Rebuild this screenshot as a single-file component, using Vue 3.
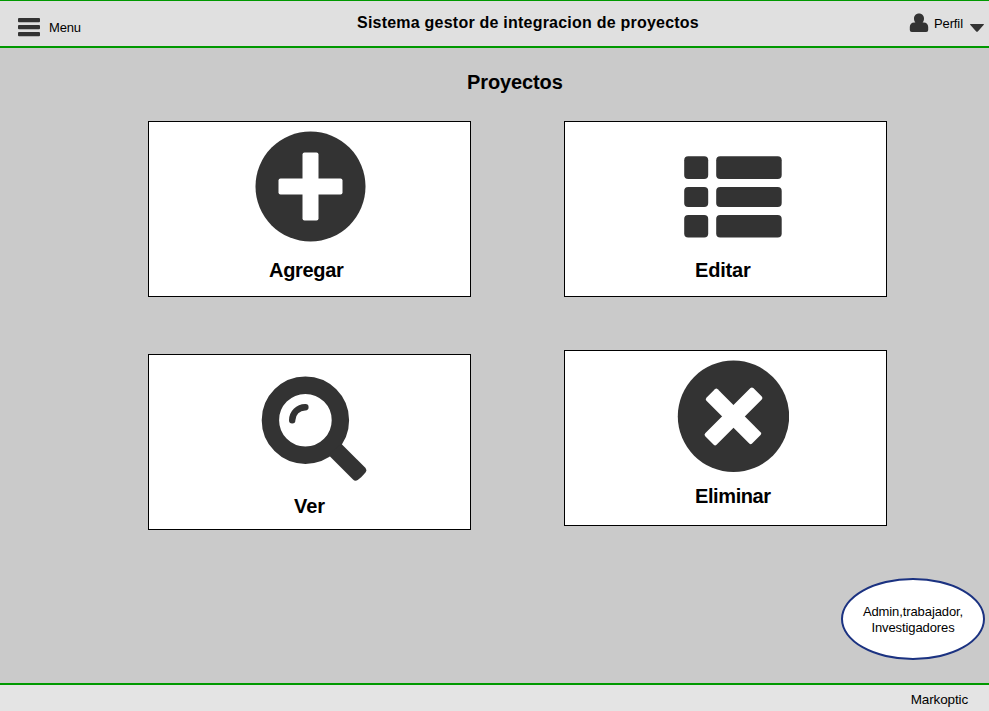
<script setup>
const columns = [
  [
    { id: 'agregar', label: 'Agregar' },
    { id: 'ver', label: 'Ver' },
  ],
  [
    { id: 'editar', label: 'Editar' },
    { id: 'eliminar', label: 'Eliminar' },
  ],
]
</script>

<template>
  <div class="page">
    <header class="topbar">
      <div class="menu">
        <svg class="menu-icon" width="22" height="19" viewBox="0 0 22 19">
          <rect y="0" width="22" height="4.3" rx="1" />
          <rect y="7" width="22" height="4.3" rx="1" />
          <rect y="14" width="22" height="4.300" rx="1" />
        </svg>
        <span class="menu-text">Menu</span>
      </div>
      <h1 class="title">Sistema gestor de integracion de proyectos</h1>
      <div class="profile">
        <svg class="user-icon" width="20" height="20" viewBox="0 0 20 20">
          <path d="M10 .6c3 0 5 2.200 5 5 0 1.700-.5 3-1.400 4h1.200c2.600 0 4.400 1.900 4.400 4.500V17q0 2-2 2H2.800q-2 0-2-2v-2.900c0-2.600 1.800-4.500 4.400-4.500h1.200C5.500 8.600 5 7.300 5 5.600c0-2.800 2-5 5-5z" />
        </svg>
        <span class="profile-text">Perfil</span>
        <svg class="caret" width="16" height="10" viewBox="0 0 16 10">
          <path d="M1.500 1h13q.8 0 .3.800L8.800 8.500q-.8.700-1.600 0L1.200 1.800q-.5-.8.300-.8z" />
        </svg>
      </div>
    </header>

    <main class="content">
      <h2 class="heading">Proyectos</h2>
      <div class="columns">
        <div v-for="(cards, i) in columns" :key="i" class="column">
          <section v-for="card in cards" :key="card.id" class="card" :class="card.id">
            <svg v-if="card.id === 'agregar'" class="icon" width="112" height="112" viewBox="0 0 112 112">
              <circle cx="55.500" cy="55.500" r="55" />
              <g class="cut">
                <rect x="23.500" y="47.500" width="64" height="16" rx="2" />
                <rect x="47.500" y="21.500" width="16" height="68" rx="2" />
              </g>
            </svg>
            <svg v-else-if="card.id === 'editar'" class="icon" width="98" height="82" viewBox="0 0 98 82">
              <rect x=".2" y=".2" width="24" height="22.800" rx="4" />
              <rect x="32.200" y=".2" width="65.500" height="22.800" rx="4" />
              <rect x=".2" y="31" width="24" height="20" rx="4" />
              <rect x="32.200" y="31" width="65.500" height="20" rx="4" />
              <rect x=".2" y="59" width="24" height="22.500" rx="4" />
              <rect x="32.200" y="59" width="65.500" height="22.500" rx="4" />
            </svg>
            <svg v-else-if="card.id === 'ver'" class="icon" width="106" height="106" viewBox="0 0 106 106">
              <circle class="lens" cx="44.400" cy="44.200" r="35" />
              <path class="glint" d="M31.200 44.300A13 13 0 0 1 44.400 31.200" />
              <path d="M80 67.500L104.300 91.800Q106.300 94 104.300 96.800Q101 101 96.700 104Q94.200 105.600 92 103.500L67.500 79z" />
            </svg>
            <svg v-else class="icon" width="112" height="112" viewBox="0 0 112 112">
              <circle cx="56.500" cy="56.300" r="55.700" />
              <g class="cut" transform="translate(56.500 56.400) rotate(45)">
                <rect x="-32.300" y="-8" width="64.600" height="16" rx="2" />
                <rect x="-8" y="-34" width="16" height="68" rx="2" />
              </g>
            </svg>
            <h3 class="label">{{ card.label }}</h3>
          </section>
        </div>
      </div>
      <div class="roles">Admin,trabajador,<br />Investigadores</div>
    </main>

    <footer class="footer">Markoptic</footer>
  </div>
</template>

<style>
body {
  margin: 0;
}
</style>

<style scoped>
.page {
  display: flex;
  flex-direction: column;
  box-sizing: border-box;
  width: 989px;
  height: 711px;
  overflow: hidden;
  background: #cacaca;
  color: #000;
  font-family: "Liberation Sans", Arial, sans-serif;
  font-size: 13px;
}
h1, h2, h3 {
  margin: 0;
  font-weight: 700;
}
svg {
  display: block;
  flex: none;
  fill: #333;
}
.topbar {
  display: grid;
  grid-template-columns: 357px 1fr 80px;
  box-sizing: border-box;
  height: 48px;
  border-top: 1px solid #009900;
  border-bottom: 2px solid #009900;
  background: #e0e0e0;
}
.menu {
  display: flex;
  align-items: flex-start;
  gap: 9px;
  padding: 17px 0 0 18px;
}
.menu-text {
  margin-top: 1px;
  letter-spacing: -0.15px;
  line-height: 18px;
}
.title {
  padding-top: 13px;
  font-size: 16px;
  letter-spacing: 0.225px;
  line-height: 18px;
  white-space: nowrap;
}
.profile {
  display: flex;
  align-items: flex-start;
  padding-top: 12px;
}
.profile-text {
  width: 29px;
  margin: 3px 6px 0 5px;
  letter-spacing: -0.12px;
  line-height: 16px;
}
.caret {
  margin-top: 10px;
}
.content {
  display: flex;
  flex: 1;
  flex-direction: column;
  padding: 22px 4px 23px 148px;
}
.heading {
  padding-left: 319px;
  font-size: 20px;
  letter-spacing: -0.12px;
  line-height: 24px;
}
.columns {
  display: flex;
  gap: 93px;
  margin-top: 27px;
}
.column {
  display: flex;
  flex-direction: column;
  gap: 57px;
}
.column + .column {
  gap: 53px;
}
.card {
  display: flex;
  flex-direction: column;
  justify-content: space-between;
  box-sizing: border-box;
  width: 323px;
  height: 176px;
  border: 1px solid #000;
  background: #fff;
}
.label {
  font-size: 20px;
  line-height: 24px;
}
.cut {
  fill: #fff;
}
.lens,
.glint {
  fill: none;
  stroke: #333;
  stroke-width: 17.400;
}
.glint {
  stroke-width: 6.400;
  stroke-linecap: round;
}
.agregar {
  padding: 9px 0 14px 106px;
}
.agregar .label {
  padding-left: 14px;
  letter-spacing: -0.3px;
}
.editar {
  padding: 34px 0 14px 119px;
}
.editar .label {
  padding-left: 11px;
  letter-spacing: -0.18px;
}
.ver {
  padding: 21px 0 11px 112px;
}
.ver .label {
  padding-left: 33px;
}
.eliminar {
  padding: 9px 0 17px 112px;
}
.eliminar .label {
  padding-left: 18px;
  letter-spacing: -0.4px;
}
.roles {
  display: flex;
  align-items: center;
  justify-content: center;
  align-self: flex-end;
  box-sizing: border-box;
  width: 144px;
  height: 82px;
  margin-top: auto;
  padding-top: 2px;
  border: 2px solid #1b3281;
  border-radius: 50%;
  background: #fff;
  letter-spacing: -0.1px;
  line-height: 16px;
  text-align: center;
}
.footer {
  box-sizing: border-box;
  height: 28px;
  padding: 6px 21px 0 0;
  border-top: 2px solid #009900;
  background: #e4e4e4;
  font-size: 13.500px;
  letter-spacing: -0.14px;
  line-height: 18px;
  text-align: right;
}
</style>
